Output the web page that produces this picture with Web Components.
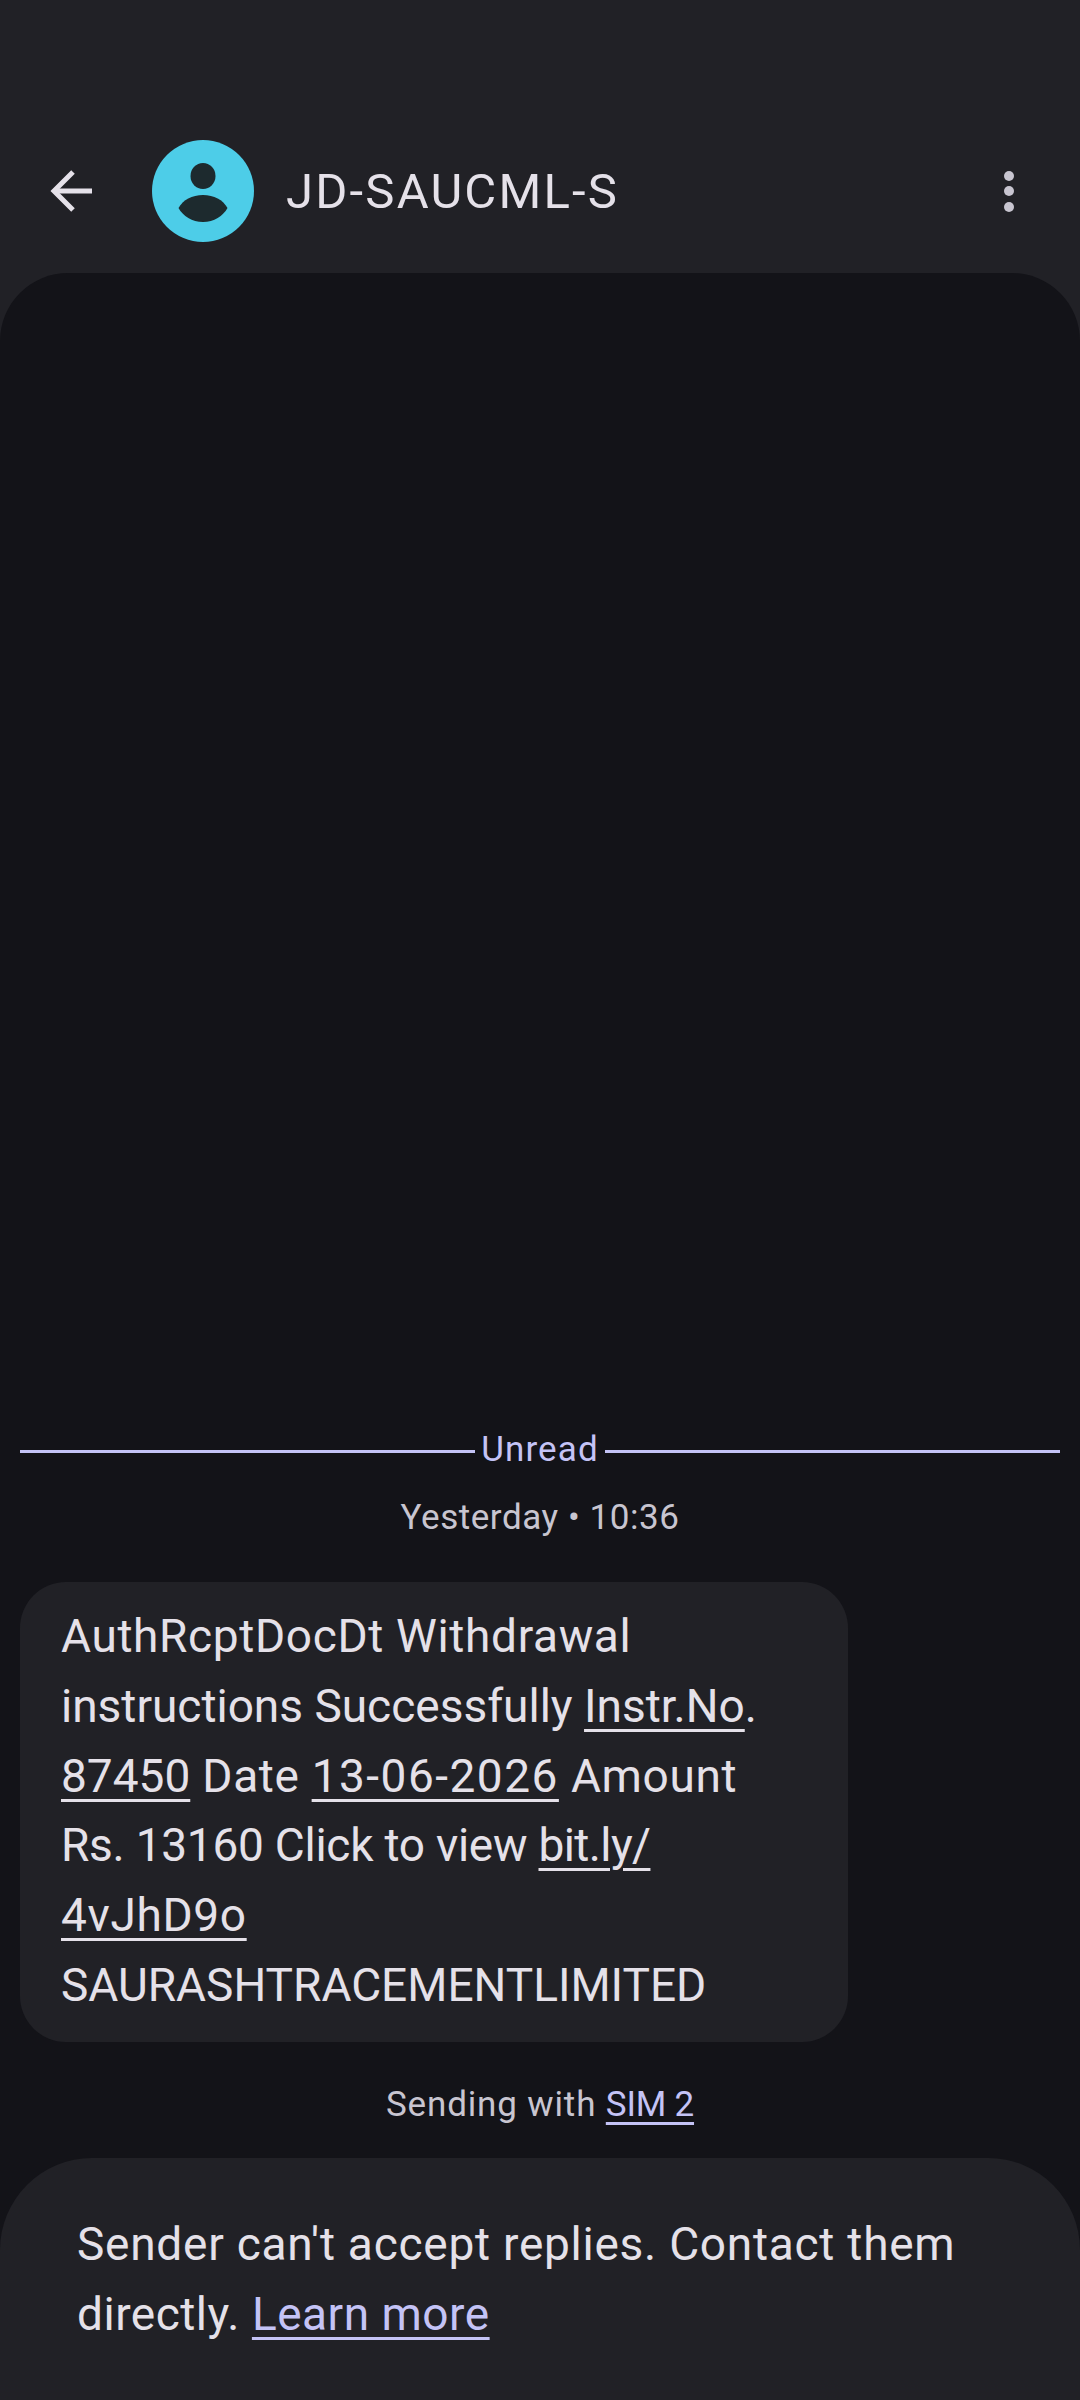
<!DOCTYPE html>
<html>
<head>
<meta charset="utf-8">
<style>
  html, body { margin: 0; height: 100%; background: #212126; }
  body { font-family: "Roboto", "Inter", sans-serif; color: #e5e1e9; }
  msg-screen { height: 2400px; }
  /* Google Sans isn't installed, so the tracking is tuned run by run */
  .t0 { letter-spacing: 0; }
  .t1 { letter-spacing: 0.65px; }
  .t2 { letter-spacing: 1.5px; }
  .t3 { letter-spacing: -0.25px; }
  .t4 { letter-spacing: -0.6px; }
</style>
</head>
<body>
<msg-screen>
  <msg-appbar slot="header" title-text="JD-SAUCML-S"></msg-appbar>
  <unread-divider>Unread</unread-divider>
  <msg-meta>Yesterday • 10:36</msg-meta>
  <msg-bubble><span class="t1">AuthRcptDocDt Withdrawal </span><span class="t0">instructions Successfully </span><u class="t0">Instr.No</u><span class="t0">. </span><u class="t0">87450</u><span class="t1"> Date </span><u class="t2">13-06-2026</u><span class="t1"> Amount </span><span class="t3">Rs. 13160 Click to view </span><u class="t4">bit.ly/<wbr></u><u class="t1">4vJhD9o</u> <span class="t0">SAURASHTRACEMENTLIMITED</span></msg-bubble>
  <msg-sim></msg-sim>
  <reply-banner slot="footer"></reply-banner>
</msg-screen>
<script>
class MsgScreen extends HTMLElement {
  constructor() {
    super();
    this.attachShadow({ mode: "open" });
    this.shadowRoot.innerHTML = `
    <style>
      :host { display: flex; flex-direction: column; background: #212126; overflow: hidden; }
      .panel {
        flex: 1;
        display: flex;
        flex-direction: column;
        justify-content: flex-end;
        background: #131318;
        border-radius: 68px 68px 0 0;
      }
    </style>
    <slot name="header"></slot>
    <div class="panel">
      <slot></slot>
      <slot name="footer"></slot>
    </div>`;
  }
}

class MsgAppbar extends HTMLElement {
  constructor() {
    super();
    this.attachShadow({ mode: "open" });
    this.shadowRoot.innerHTML = `
    <style>
      :host { display: flex; align-items: center; height: 273px; box-sizing: border-box; padding: 109px 66px 0 50px; background: #212126; }
      .wrap { display: flex; align-items: center; width: 100%; height: 164px; }
      .back { flex: none; width: 43px; height: 42px; margin-right: 59px; }
      .avatar { flex: none; width: 102px; height: 102px; margin-right: 32px; }
      .title { flex: 1; font-size: 49px; letter-spacing: 2.2px; color: #e5e1e9; white-space: nowrap; }
      .dots { flex: none; width: 10px; display: flex; flex-direction: column; gap: 5.5px; }
      .dots i { display: block; width: 10px; height: 10px; border-radius: 50%; background: #c8c5d0; }
    </style>
    <div class="wrap">
      <svg class="back" viewBox="0 0 43 42" fill="none" stroke="#e5e1e9" stroke-width="5"><path d="M42 21H5"/><path d="M23 2 4 21l19 19"/></svg>
      <svg class="avatar" viewBox="0 0 102 102"><circle cx="51" cy="51" r="51" fill="#4dcde8"/><ellipse cx="51" cy="36" rx="12.500" ry="13" fill="#1d2a2e"/><path d="M26.500 68C31 60 40 55 51 55s20 5 24.500 13C71 76 62 82 51 82S31 76 26.500 68Z" fill="#1d2a2e"/></svg>
      <div class="title"></div>
      <div class="dots"><i></i><i></i><i></i></div>
    </div>`;
  }
  connectedCallback() {
    this.shadowRoot.querySelector(".title").textContent = this.getAttribute("title-text");
  }
}

class UnreadDivider extends HTMLElement {
  constructor() {
    super();
    this.attachShadow({ mode: "open" });
    this.shadowRoot.innerHTML = `
    <style>
      :host { display: flex; align-items: center; gap: 6px; margin: 0 20px; height: 40px; color: #c4c3f6; font-size: 35px; letter-spacing: 1.1px; }
      .line { flex: 1; height: 3px; background: #c4c3f6; }
      .label { line-height: 36px; margin-top: -2px; }
    </style>
    <span class="line"></span><span class="label"><slot></slot></span><span class="line"></span>`;
  }
}

class MsgMeta extends HTMLElement {
  constructor() {
    super();
    this.attachShadow({ mode: "open" });
    this.shadowRoot.innerHTML = `
    <style>
      :host { display: block; text-align: center; margin: 25px 0 42px; font-size: 35px; line-height: 44px; letter-spacing: 0.55px; color: #c8c5d0; }
    </style>
    <slot></slot>`;
  }
}

class MsgBubble extends HTMLElement {
  constructor() {
    super();
    this.attachShadow({ mode: "open" });
    this.shadowRoot.innerHTML = `
    <style>
      :host { display: block; width: 828px; height: 460px; box-sizing: border-box; margin-left: 20px; padding: 20px 60px 20px 41px; background: #212126; border-radius: 46px; font-size: 46px; line-height: 69.8px; color: #e5e1e9; }
      ::slotted(u) { text-underline-offset: 7px; text-decoration-thickness: 3px; }
    </style>
    <slot></slot>`;
  }
}

class MsgSim extends HTMLElement {
  constructor() {
    super();
    this.attachShadow({ mode: "open" });
    this.shadowRoot.innerHTML = `
    <style>
      :host { display: block; text-align: center; margin: 41px 0 31px; font-size: 35px; line-height: 44px; letter-spacing: 0.85px; color: #c8c5d0; }
      a { color: #c4c3f6; letter-spacing: -0.2px; text-decoration: underline; text-underline-offset: 6px; text-decoration-thickness: 3px; }
    </style>
    Sending with <a>SIM 2</a>`;
  }
}

class ReplyBanner extends HTMLElement {
  constructor() {
    super();
    this.attachShadow({ mode: "open" });
    this.shadowRoot.innerHTML = `
    <style>
      :host { display: block; height: 242px; box-sizing: border-box; padding: 51px 60px 0 77px; background: #212126; border-radius: 92px 92px 0 0; font-size: 46px; line-height: 70px; letter-spacing: 0.75px; color: #e5e1e9; }
      .tail { letter-spacing: 0.5px; }
      a { color: #c4c3f6; text-decoration: underline; text-underline-offset: 7px; text-decoration-thickness: 3px; }
    </style>
    <span>Sender can't accept replies. Contact them </span><span class="tail">directly. <a>Learn more</a></span>`;
  }
}

customElements.define("msg-screen", MsgScreen);
customElements.define("msg-appbar", MsgAppbar);
customElements.define("unread-divider", UnreadDivider);
customElements.define("msg-meta", MsgMeta);
customElements.define("msg-bubble", MsgBubble);
customElements.define("msg-sim", MsgSim);
customElements.define("reply-banner", ReplyBanner);
</script>
</body>
</html>
